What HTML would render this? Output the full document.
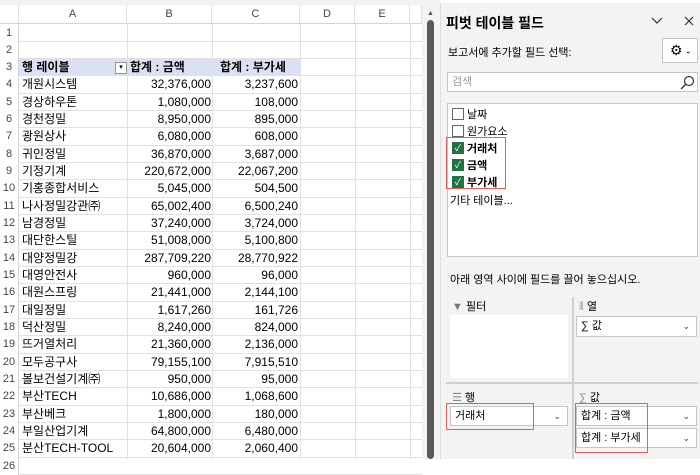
<html><head><style>
body{margin:0;width:700px;height:459px;overflow:hidden;background:#fff;font-family:"Liberation Sans","Noto Sans CJK KR",sans-serif;position:relative}
.a{position:absolute}
.ch{position:absolute;top:5px;height:19px;background:#fff;border-bottom:1px solid #d4d4d4;font-size:11px;color:#444;text-align:center;line-height:19px;border-right:1px solid #e1e1e1;box-sizing:border-box}
.rn{position:absolute;left:0;width:19px;font-size:11px;color:#444;text-align:center;border-right:1px solid #d4d4d4;box-sizing:border-box}
.row{position:absolute;left:19px;width:403px;height:17.33px;border-bottom:1px solid #e1e1e1;box-sizing:border-box;font-size:12px;line-height:17px}
.c1{position:absolute;left:3px}.c2{position:absolute;right:211px}.c3{position:absolute;right:124px}
.vl{position:absolute;top:24px;height:435px;width:1px;background:#e1e1e1}
.cb{position:absolute;left:452px;width:10px;height:10px;border:1px solid #666;background:#fff}
.cb.on{background:#217346;border-color:#217346;color:#fff;font-size:9px;line-height:10px;text-align:center}
.it{position:absolute;left:467px;font-size:11px}
.box{position:absolute;background:#fff;border:1px solid #c6c6c6;box-sizing:border-box;font-size:11px;line-height:18px;padding-left:4px}
.dd{position:absolute;right:6px;top:0;font-size:9px;color:#444}
.red{position:absolute;border:1.5px solid #e06060;box-sizing:border-box}
</style></head><body>
<div class="a" style="left:0;top:0;width:440px;height:5px;background:#f3f3f3"></div>
<div class="ch" style="left:0;width:19px;background:#fff"></div>
<div class="ch" style="left:19px;width:108px">A</div>
<div class="ch" style="left:127px;width:85px">B</div>
<div class="ch" style="left:212px;width:88px">C</div>
<div class="ch" style="left:300px;width:55px">D</div>
<div class="ch" style="left:355px;width:55px">E</div>
<div class="ch" style="left:410px;width:12px"></div>
<div class="vl" style="left:127px"></div><div class="vl" style="left:212px"></div><div class="vl" style="left:300px"></div><div class="vl" style="left:355px"></div><div class="vl" style="left:410px"></div>
<div class="a" style="left:422px;top:5px;width:18px;height:454px;background:#f3f3f3"></div>
<div class="a" style="left:427px;top:10px;font-size:7px;color:#555">▲</div>
<div class="a" style="left:427px;top:20px;width:7px;height:439px;background:#5a5a5a;border-radius:4px"></div>
<div id="rows"></div>
<script>
var d=[["",""," "],["","",""],["행 레이블","합계 : 금액","합계 : 부가세"],["개원시스템","32,376,000","3,237,600"],["경상하우톤","1,080,000","108,000"],["경천정밀","8,950,000","895,000"],["광원상사","6,080,000","608,000"],["귀인정밀","36,870,000","3,687,000"],["기정기계","220,672,000","22,067,200"],["기홍종합서비스","5,045,000","504,500"],["나사정밀강관㈜","65,002,400","6,500,240"],["남경정밀","37,240,000","3,724,000"],["대단한스틸","51,008,000","5,100,800"],["대양정밀강","287,709,220","28,770,922"],["대영안전사","960,000","96,000"],["대원스프링","21,441,000","2,144,100"],["대일정밀","1,617,260","161,726"],["덕산정밀","8,240,000","824,000"],["뜨거열처리","21,360,000","2,136,000"],["모두공구사","79,155,100","7,915,510"],["볼보건설기계㈜","950,000","95,000"],["부산TECH","10,686,000","1,068,600"],["부산베크","1,800,000","180,000"],["부일산업기계","64,800,000","6,480,000"],["분산TECH-TOOL","20,604,000","2,060,400"],["","",""]];
var h="";for(var i=0;i<d.length;i++){var t=24.5+i*17.33;
h+='<div class="rn" style="top:'+t+'px;height:17.33px;line-height:17px">'+(i+1)+'</div>';
var st=i==2?'background:linear-gradient(90deg,#d9e1f2 0,#d9e1f2 281px,transparent 281px);font-weight:bold;':'';
var c2=i==2?'<span style="position:absolute;left:111px">'+d[i][1]+'</span><span style="position:absolute;left:201px">'+d[i][2]+'</span><span style="position:absolute;left:96px;top:3px;width:10px;height:10px;border:1px solid #999;background:#fff;font-size:7px;line-height:10px;text-align:center;font-weight:normal">▾</span>':'<span class="c2">'+d[i][1]+'</span><span class="c3">'+d[i][2]+'</span>';
h+='<div class="row" style="top:'+t+'px;'+st+'"><span class="c1">'+d[i][0]+'</span>'+c2+'</div>';}
document.getElementById("rows").innerHTML=h;
</script>
<div class="a" style="left:440px;top:0;width:260px;height:459px;background:#f3f3f3;border-left:1px solid #ddd"></div>
<div class="a" style="left:440px;top:0;width:260px;height:3px;background:#fff"></div>
<div class="a" style="left:446px;top:13px;font-size:14px;font-weight:bold">피벗 테이블 필드</div>
<svg class="a" style="left:651px;top:17px" width="12" height="8"><path d="M1 1L6 6L11 1" stroke="#333" fill="none" stroke-width="1.2"/></svg>
<svg class="a" style="left:684px;top:16px" width="10" height="10"><path d="M1 1L9 9M9 1L1 9" stroke="#333" stroke-width="1.2"/></svg>
<div class="a" style="left:448px;top:44px;font-size:11px">보고서에 추가할 필드 선택:</div>
<div class="box" style="left:662px;top:38px;width:36px;height:25px;font-size:14px;line-height:22px;padding-left:7px">⚙<span style="font-size:8px;vertical-align:middle"> ⌄</span></div>
<div class="box" style="left:447px;top:72px;width:251px;height:20px;color:#999">검색</div>
<svg class="a" style="left:680px;top:75px" width="15" height="15"><circle cx="9" cy="6" r="4.5" stroke="#333" fill="none" stroke-width="1.2"/><path d="M6 9L1 14" stroke="#333" stroke-width="1.3"/></svg>
<div class="a" style="left:447px;top:103px;width:251px;height:154px;background:#fff;border:1px solid #c6c6c6;box-sizing:border-box"></div>
<div class="cb" style="top:108px"></div><div class="it" style="top:106px">날짜</div>
<div class="cb" style="top:125px"></div><div class="it" style="top:123px">원가요소</div>
<div class="cb on" style="top:142px">✓</div><div class="it" style="top:140px;font-weight:bold">거래처</div>
<div class="cb on" style="top:159px">✓</div><div class="it" style="top:157px;font-weight:bold">금액</div>
<div class="cb on" style="top:176px">✓</div><div class="it" style="top:174px;font-weight:bold">부가세</div>
<div class="a" style="left:450px;top:192px;font-size:11px">기타 테이블...</div>
<div class="red" style="left:446px;top:137px;width:60px;height:52px"></div>
<div class="a" style="left:450px;top:271px;font-size:11px">아래 영역 사이에 필드를 끌어 놓으십시오.</div>
<div class="a" style="left:572px;top:297px;width:2px;height:162px;background:#d0d0d0"></div>
<div class="a" style="left:446px;top:382px;width:252px;height:2px;background:#d0d0d0"></div>
<div class="a" style="left:452px;top:298px;font-size:11px"><span style="color:#777">▼</span> 필터</div>
<div class="a" style="left:579px;top:298px;font-size:11px"><span style="color:#999">⦀</span> 열</div>
<div class="a" style="left:450px;top:315px;width:118px;height:63px;background:#fff"></div>
<div class="box" style="left:576px;top:316px;width:121px;height:21px">∑ 값<span class="dd">⌄</span></div>
<div class="a" style="left:452px;top:389px;font-size:11px"><span style="color:#888">☰</span> 행</div>
<div class="a" style="left:579px;top:389px;font-size:11px"><span style="color:#888">∑</span> 값</div>
<div class="box" style="left:450px;top:406px;width:118px;height:20px">거래처<span class="dd">⌄</span></div>
<div class="box" style="left:576px;top:406px;width:121px;height:20px">합계 : 금액<span class="dd">⌄</span></div>
<div class="box" style="left:576px;top:428px;width:121px;height:20px">합계 : 부가세<span class="dd">⌄</span></div>
<div class="red" style="left:446px;top:403px;width:88px;height:27px"></div>
<div class="red" style="left:575px;top:403px;width:73px;height:50px"></div>
</body></html>
